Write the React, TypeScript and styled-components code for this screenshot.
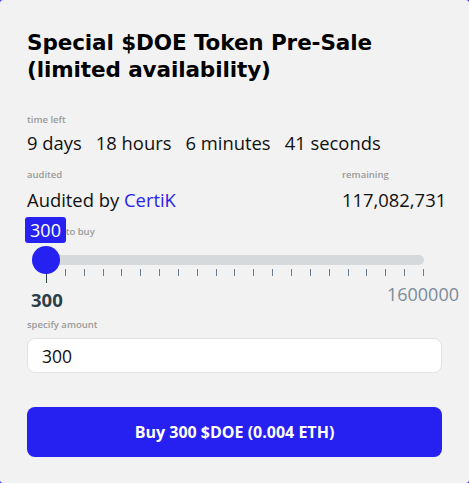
import React from "react";
import styled, { createGlobalStyle } from "styled-components";

const GlobalStyle = createGlobalStyle`
    html, body {
        margin: 0;
        padding: 0;
        background: #2621f1;
    }
    * { box-sizing: border-box; }
`;

const Card = styled.div`
    width: 469px;
    height: 483px;
    background: #f2f2f2;
    border-radius: 3px;
    padding: 30px 27px 0 27px;
    display: flex;
    flex-direction: column;
    font-family: "Open Sans", "Noto Sans", sans-serif;
    color: #111;
`;

const Title = styled.h1`
    margin: 0;
    font-family: "DejaVu Sans", sans-serif;
    font-weight: bold;
    font-size: 21.5px;
    line-height: 26.5px;
    letter-spacing: -0.1px;
    color: #000;
`;

const Label = styled.div<{ $mt?: number }>`
    margin-top: ${ (props) => (props.$mt ?? 0) + "px" };
    font-size: 9.5px;
    line-height: 12px;
    font-weight: 600;
    color: #9a9a9a;
`;

const BigText = styled.div<{ $mt?: number }>`
    margin-top: ${ (props) => (props.$mt ?? 5) + "px" };
    font-size: 18.4px;
    line-height: 24px;
    white-space: nowrap;
`;

const TimeRow = styled(BigText)`
    display: flex;
    gap: 14px;
`;

const InfoGrid = styled.div`
    margin-top: 14px;
    display: grid;
    grid-template-columns: 1fr 100px;
`;

const Certik = styled.span`
    color: #2a22ea;
`;

const SliderBox = styled.div`
    position: relative;
    margin-top: 14px;
    padding-left: 19px;
    padding-right: 18px;
`;

const Bubble = styled.div`
    position: absolute;
    left: -2px;
    top: -9px;
    width: 41px;
    height: 26px;
    border-radius: 3px;
    background: #2621f1;
    color: #fff;
    font-size: 18px;
    line-height: 26px;
    text-align: center;
`;

const Track = styled.div`
    position: relative;
    margin-top: 17px;
    height: 10px;
    border-radius: 5px;
    background: #d6d9db;
`;

const Thumb = styled.div`
    position: absolute;
    left: -14px;
    top: -9px;
    width: 28px;
    height: 28px;
    border-radius: 50%;
    background: #2621f1;
`;

const Ticks = styled.div`
    display: flex;
    justify-content: space-between;
    margin-top: 4px;
    height: 14px;
`;

const Tick = styled.div<{ $active?: boolean }>`
    width: 1px;
    height: ${ (props) => props.$active ? "14px" : "7px" };
    background: ${ (props) => props.$active ? "#2d4048" : "#6b7b8a" };
`;

const RangeRow = styled.div`
    display: flex;
    justify-content: space-between;
    align-items: flex-start;
    margin-left: -17px;
    margin-right: -35px;
`;

const MinValue = styled.span`
    margin-left: 2px;
    margin-top: 6px;
    font-size: 18.5px;
    line-height: 22px;
    font-weight: bold;
    color: #2d3f46;
`;

const MaxValue = styled.span`
    font-size: 18px;
    line-height: 22px;
    color: #7b8b9a;
`;

const AmountInput = styled.input`
    margin-top: 7px;
    width: 100%;
    height: 35px;
    border: 1px solid #e2e2e2;
    border-radius: 8px;
    background: #fff;
    padding: 0 14px;
    font-family: "Open Sans", "Noto Sans", sans-serif;
    font-size: 17.5px;
    color: #111;
    outline: none;
`;

const BuyButton = styled.button`
    margin-top: 34px;
    width: 100%;
    height: 50px;
    border: none;
    border-radius: 8px;
    background: #2621f1;
    color: #fff;
    font-family: "Open Sans", "Noto Sans", sans-serif;
    font-weight: bold;
    font-size: 16px;
    cursor: pointer;
`;

export default function App() {
    const ticks = Array.from({ length: 21 }, (_, i) => i);

    return (
        <>
            <GlobalStyle />
            <Card>
                <Title>
                    Special $DOE Token Pre-Sale<br />(limited availability)
                </Title>

                <Label $mt={31}>time left</Label>
                <TimeRow>
                    <span>9 days</span>
                    <span>18 hours</span>
                    <span>6 minutes</span>
                    <span>41 seconds</span>
                </TimeRow>

                <InfoGrid>
                    <Label>audited</Label>
                    <Label>remaining</Label>
                    <BigText $mt={7}>Audited by <Certik>CertiK</Certik></BigText>
                    <BigText $mt={7}>117,082,731</BigText>
                </InfoGrid>

                <SliderBox>
                    <Label style={{ marginLeft: -19 }}>amount to buy</Label>
                    <Bubble>300</Bubble>
                    <Track>
                        <Thumb />
                    </Track>
                    <Ticks>
                        {ticks.map((i) => <Tick key={i} $active={i === 0} />)}
                    </Ticks>
                    <RangeRow>
                        <MinValue>300</MinValue>
                        <MaxValue>1600000</MaxValue>
                    </RangeRow>
                </SliderBox>

                <Label $mt={8}>specify amount</Label>
                <AmountInput defaultValue="300" />

                <BuyButton>Buy 300 $DOE (0.004 ETH)</BuyButton>
            </Card>
        </>
    );
}
